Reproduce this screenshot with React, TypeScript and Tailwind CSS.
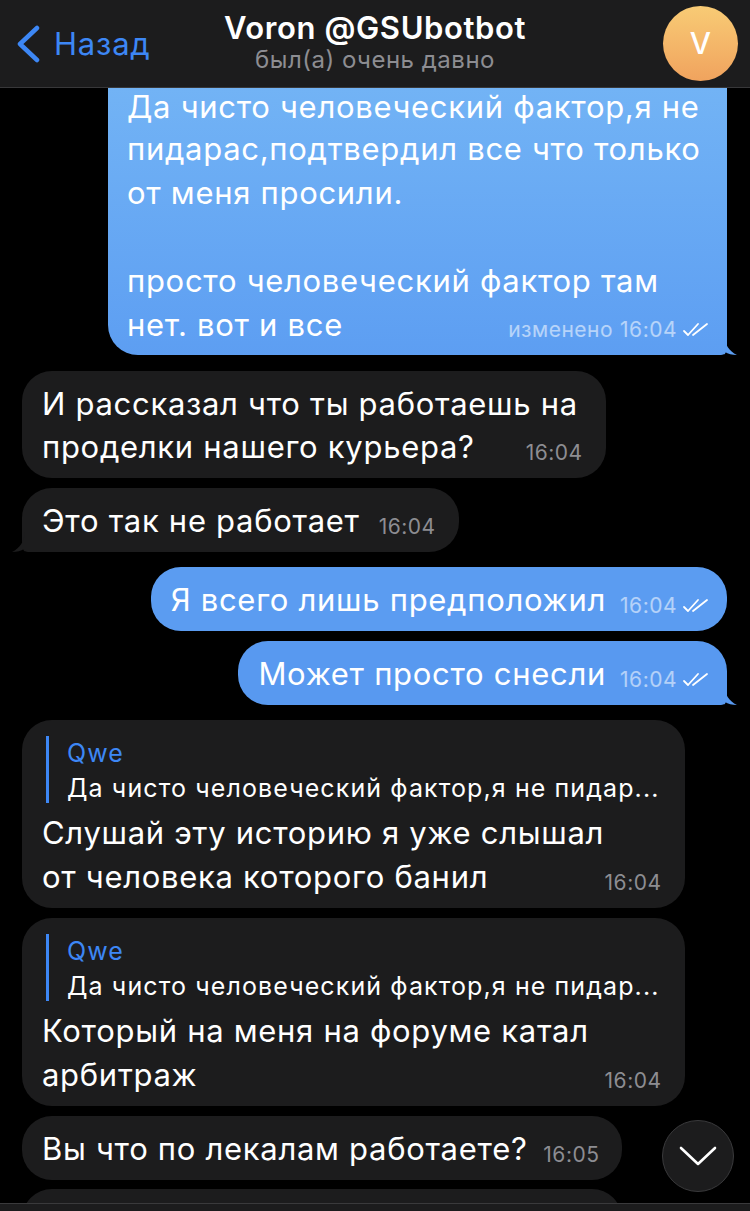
import type { ReactNode } from "react";

const font = { fontFamily: "Inter, 'Noto Sans', sans-serif" };

function Checks() {
  return (
    <svg width="28" height="16" viewBox="0 0 28 16" fill="none" className="ml-[5px]">
      <path d="M2 9 L6 13 L16 2" stroke="white" strokeWidth="1.8" strokeLinecap="round" strokeLinejoin="round" />
      <path d="M11 13 L25 2" stroke="white" strokeWidth="1.8" strokeLinecap="round" />
    </svg>
  );
}

function Tail({ out, color }: { out: boolean; color: string }) {
  if (out) {
    return (
      <svg width="14" height="20" viewBox="0 0 14 20" className="absolute bottom-0 right-[-11px]">
        <path d="M0 0 C1 10 5 16 13 20 C8 20 4 19 1 17 L0 20 Z" fill={color} />
      </svg>
    );
  }
  return (
    <svg width="14" height="20" viewBox="0 0 14 20" className="absolute bottom-0 left-[-11px]">
      <path d="M14 0 C13 10 9 16 1 20 C6 20 10 19 13 17 L14 20 Z" fill={color} />
    </svg>
  );
}

interface BubbleProps {
  out?: boolean;
  tail?: boolean;
  time: string;
  edited?: boolean;
  spacer: number;
  className?: string;
  tailColor?: string;
  children: ReactNode;
}

function Bubble({ out, tail, time, edited, spacer, className, tailColor, children }: BubbleProps) {
  return (
    <div
      className={`relative rounded-[30px] px-[20px] text-[31px] tracking-[0.7px] text-white ${
        out ? "self-end mr-[23px]" : "self-start ml-[22px]"
      } ${tail ? (out ? "rounded-br-[6px]" : "rounded-bl-[6px]") : ""} ${className ?? ""}`}
    >
      {children}
      <span className="inline-block" style={{ width: spacer }} />
      <div
        className={`absolute bottom-[13px] flex items-center text-[21px] leading-[24px] tracking-[0.5px] ${
          out ? "right-[17px] text-white/55" : "right-[23px] text-[#8d8d92]"
        }`}
      >
        {edited && <span className="mr-[7px]">изменено</span>}
        <span>{time}</span>
        {out && <Checks />}
      </div>
      {tail && <Tail out={!!out} color={tailColor ?? "#1c1c1d"} />}
    </div>
  );
}

function Reply() {
  return (
    <div className="ml-[4px] mb-[8px] flex border-l-[3px] border-[#3d87f5] pl-[18px] leading-none">
      <div className="flex flex-col tracking-[1.1px]">
        <span className="text-[25px] leading-[34px] text-[#3d87f5]">Qwe</span>
        <span className="mt-[3px] text-[25px] leading-[30px] text-white">
          Да чисто человеческий фактор,я не пидар...
        </span>
      </div>
    </div>
  );
}

const single = "pt-[11px] pb-[10px] leading-[43px]";

export default function App() {
  return (
    <div className="flex h-[1211px] w-[750px] flex-col overflow-hidden bg-black" style={font}>
      <header className="flex h-[88px] shrink-0 items-center border-b border-[#38383a] bg-[#1c1c1d] px-[15px]">
        <div className="flex w-[180px] items-center text-[#3d87f5]">
          <svg width="26" height="38" viewBox="0 0 26 38" fill="none">
            <path d="M22 3 L5 19 L22 35" stroke="#3d87f5" strokeWidth="4.5" strokeLinecap="round" strokeLinejoin="round" />
          </svg>
          <span className="ml-[13px] text-[31px] leading-[36px] tracking-[0.8px]">Назад</span>
        </div>
        <div className="mt-[-3px] flex flex-1 flex-col items-center">
          <span className="text-[31px] font-semibold leading-[36px] tracking-[0.6px] text-white">
            Voron @GSUbotbot
          </span>
          <span className="text-[24px] leading-[28px] tracking-[0.5px] text-[#8d8d92]">был(а) очень давно</span>
        </div>
        <div className="flex w-[180px] justify-end">
          <div className="mr-[-3px] flex h-[75px] w-[75px] items-center justify-center rounded-full bg-gradient-to-b from-[#f8cb75] to-[#f0a35e] text-[30px] font-medium text-white">
            V
          </div>
        </div>
      </header>

      <main className="flex flex-1 flex-col overflow-hidden">
        <Bubble
          out
          tail
          edited
          time="16:04"
          spacer={0}
          tailColor="#5c9ef2"
          className="w-[619px] rounded-t-none pl-[19px] pb-[8px] leading-[44px] bg-gradient-to-b from-[#72b3f5] to-[#5d9ef2]"
        >
          <div className="mb-[2px] leading-[37px]">Да чисто человеческий фактор,я не</div>
          пидарас,подтвердил все что только
          <br />
          от меня просили.
          <br />
          <br />
          просто человеческий фактор там
          <br />
          нет. вот и все
        </Bubble>

        <Bubble time="16:04" spacer={111} className={`mt-[16px] bg-[#1c1c1d] ${single}`}>
          И рассказал что ты работаешь на
          <br />
          проделки нашего курьера?
        </Bubble>

        <Bubble tail time="16:04" spacer={79} className={`mt-[10px] bg-[#1c1c1d] ${single}`}>
          Это так не работает
        </Bubble>

        <Bubble out time="16:04" spacer={101} className={`mt-[15px] bg-[#5b9cf1] ${single}`}>
          Я всего лишь предположил
        </Bubble>

        <Bubble out tail time="16:04" spacer={101} tailColor="#5899f0" className={`mt-[10px] bg-[#5899f0] ${single}`}>
          Может просто снесли
        </Bubble>

        <Bubble time="16:04" spacer={80} className="mt-[15px] bg-[#1c1c1d] pt-[16px] pb-[9px] pr-[25px] leading-[44px]">
          <Reply />
          Слушай эту историю я уже слышал
          <br />
          от человека которого банил
        </Bubble>

        <Bubble time="16:04" spacer={80} className="mt-[10px] bg-[#1c1c1d] pt-[16px] pb-[9px] pr-[25px] leading-[44px]">
          <Reply />
          Который на меня на форуме катал
          <br />
          арбитраж
        </Bubble>

        <div className="relative flex items-start">
          <Bubble time="16:05" spacer={75} className={`mt-[10px] bg-[#1c1c1d] ${single}`}>
            Вы что по лекалам работаете?
          </Bubble>
          <button className="absolute right-[16px] top-[14px] flex h-[72px] w-[72px] items-center justify-center rounded-full border border-[#3a3a3c] bg-[#1c1c1d]">
            <svg width="38" height="22" viewBox="0 0 38 22" fill="none">
              <path d="M2 3 L19 19 L36 3" stroke="white" strokeWidth="2.6" strokeLinecap="round" strokeLinejoin="round" />
            </svg>
          </button>
        </div>

        <div className="ml-[22px] mt-[9px] h-[60px] w-[600px] shrink-0 rounded-t-[30px] bg-[#1c1c1d]" />
      </main>

      <footer className="h-[8px] shrink-0 border-t border-[#3a3a3c] bg-[#1c1c1d]" />
    </div>
  );
}
